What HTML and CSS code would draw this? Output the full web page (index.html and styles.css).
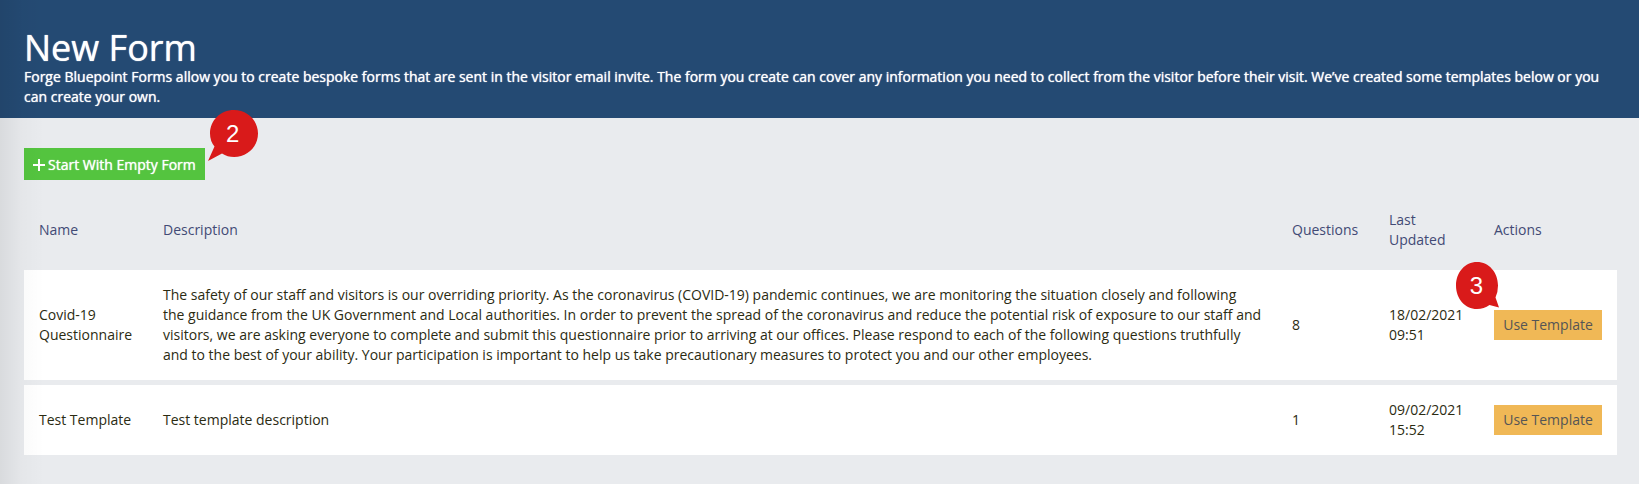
FILE: index.html
```html
<!DOCTYPE html>
<html lang="en">
<head>
<meta charset="utf-8">
<title>New Form</title>
<link rel="stylesheet" href="styles.css">
</head>
<body>
<header class="page-header">
  <h1 class="page-title">New Form</h1>
  <p class="page-intro">Forge Bluepoint Forms allow you to create bespoke forms that are sent in the visitor email invite. The form you create can cover any information you need to collect from the visitor before their visit. We’ve created some templates below or you can create your own.</p>
</header>
<main class="content">
  <div class="callout-anchor">
    <button class="btn btn-start" type="button">
      <svg class="plus" viewBox="0 0 12 12" aria-hidden="true"><path d="M6 0v12M0 6h12" stroke="currentColor" stroke-width="2"/></svg>
      Start With Empty Form
    </button>
    <span class="callout callout-two">
      <svg class="callout-shape" viewBox="0 0 50 51" aria-hidden="true"><path d="M26 0C39.500 0 50 10.500 50 23.500S39.500 47 26 47Q19.500 47 14 43.500L0 51L6.500 36.500Q2 31 2 23.500C2 10.500 12.500 0 26 0Z" fill="#d91a1a"/></svg>
      <span class="callout-number">2</span>
    </span>
  </div>
  <table class="templates">
    <colgroup>
      <col class="col-name"><col><col class="col-questions"><col class="col-updated"><col class="col-actions">
    </colgroup>
    <thead>
      <tr><th scope="col">Name</th><th scope="col">Description</th><th scope="col">Questions</th><th scope="col">Last Updated</th><th scope="col">Actions</th></tr>
    </thead>
    <tbody>
      <tr>
        <td>Covid-19 Questionnaire</td>
        <td>The safety of our staff and visitors is our overriding priority. As the coronavirus (COVID-19) pandemic continues, we are monitoring the situation closely and following<br>the guidance from the UK Government and Local authorities. In order to prevent the spread of the coronavirus and reduce the potential risk of exposure to our staff and visitors, we are asking everyone to complete and submit this questionnaire prior to arriving at our offices. Please respond to each of the following questions truthfully and to the best of your ability. Your participation is important to help us take precautionary measures to protect you and our other employees.</td>
        <td>8</td>
        <td>18/02/2021 09:51</td>
        <td>
          <div class="callout-anchor">
            <button class="btn btn-use" type="button">Use Template</button>
            <span class="callout callout-three">
              <svg class="callout-shape" viewBox="0 0 43 47" aria-hidden="true"><path d="M21 0C33 0 42 10.500 42 23.500Q42 30 39.500 35.500L43 45.500L33.500 43Q28 47 21 47C9 47 0 36.500 0 23.500S9 0 21 0Z" fill="#d91a1a"/></svg>
              <span class="callout-number">3</span>
            </span>
          </div>
        </td>
      </tr>
      <tr>
        <td>Test Template</td>
        <td>Test template description</td>
        <td>1</td>
        <td>09/02/2021 15:52</td>
        <td><button class="btn btn-use" type="button">Use Template</button></td>
      </tr>
    </tbody>
  </table>
</main>
</body>
</html>
```

FILE: styles.css
```css
* {
  box-sizing: border-box;
}

body {
  position: relative;
  min-height: 100vh;
  margin: 0;
  background: #e9ebee;
  color: #2b2b12;
  font: 14px/20px "Open Sans", "Noto Sans", sans-serif;
}

/* Shade cast by the side navigation */
body::after {
  content: "";
  position: absolute;
  inset: 0 auto 0 0;
  width: 44px;
  background: linear-gradient(to right, rgba(0, 0, 0, 0.07), rgba(0, 0, 0, 0.02) 50%, transparent);
  pointer-events: none;
}

.page-header {
  padding: 28px 24px 11px;
  background: #244a73;
  color: #fff;
}

.page-title {
  margin: 0;
  font-size: 36px;
  font-weight: 400;
  line-height: 39px;
  text-shadow: 0 0 1px currentColor;
}

.page-intro {
  margin: 0;
  text-shadow: 0 0 1px currentColor;
}

.content {
  padding: 30px 22px 24px 24px;
}

.callout-anchor {
  position: relative;
  width: fit-content;
}

.btn {
  display: flex;
  align-items: center;
  justify-content: center;
  margin: 0;
  border: 0;
  font: inherit;
  white-space: nowrap;
  cursor: pointer;
}

.btn-start {
  gap: 3px;
  height: 32px;
  padding: 2px 9px 0;
  background: #54c43f;
  color: #fff;
  text-shadow: 0 0 1px currentColor;
}

.plus {
  width: 12px;
  height: 12px;
}

.btn-use {
  width: 108px;
  height: 30px;
  padding: 0;
  background: #f0b856;
  color: #555;
}

.templates {
  width: 100%;
  margin-top: 10px;
  border-collapse: separate;
  border-spacing: 0 5px;
  table-layout: fixed;
}

.col-name {
  width: 124px;
}

.col-questions {
  width: 97px;
}

.col-updated {
  width: 105px;
}

.col-actions {
  width: 138px;
}

.templates th,
.templates td {
  padding: 15px;
  text-align: left;
  vertical-align: middle;
}

.templates th {
  color: #424a75;
  font-weight: 400;
}

.templates td {
  background: #fff;
}

.callout {
  position: absolute;
  color: #fff;
  font: 24px/47px "Liberation Sans", Arial, sans-serif;
  text-align: center;
}

.callout-shape {
  position: absolute;
  inset: 0;
  width: 100%;
  height: 100%;
}

.callout-number {
  position: relative;
}

.callout-two {
  left: calc(100% + 3px);
  top: -38px;
  width: 50px;
  height: 51px;
}

.callout-three {
  right: 103px;
  bottom: 31px;
  width: 43px;
  height: 47px;
  padding-right: 2px;
}
```
